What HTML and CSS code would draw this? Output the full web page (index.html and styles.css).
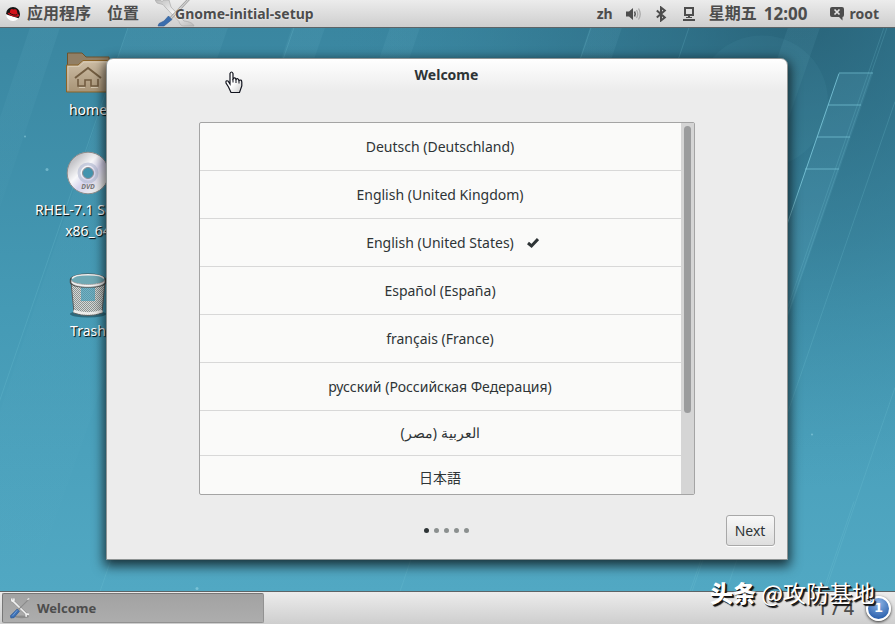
FILE: index.html
```html
<!DOCTYPE html>
<html lang="zh-CN">
<head>
<meta charset="utf-8">
<meta name="viewport" content="width=device-width, initial-scale=1">
<title>Welcome</title>
<link rel="stylesheet" href="styles.css">
</head>
<body>
<svg class="defs" width="0" height="0" aria-hidden="true">
  <defs>
    <linearGradient id="steel" x1="0" y1="0" x2="1" y2="1"><stop offset="0" stop-color="#bdbdbd"/><stop offset=".5" stop-color="#f6f6f6"/><stop offset="1" stop-color="#b9b9b9"/></linearGradient>
    <symbol id="tools" viewBox="0 0 24 24">
      <ellipse cx="14" cy="21.600" rx="8" ry="1.500" fill="#000" opacity=".18"/>
      <path d="M3 1.500 3.200 4.200 5.300 4 5.500 1.500M3.200 4.200 5.800 5.800 18.500 18.300 18.800 21.500M18.500 18.300 22 19" fill="none" stroke="#8f8f8f" stroke-width="2.800" stroke-linejoin="round"/>
      <path d="M3 1.500 3.200 4.200 5.300 4 5.500 1.500M3.200 4.200 5.800 5.800 18.500 18.300 18.800 21.500M18.500 18.300 22 19" fill="none" stroke="#f0f0f0" stroke-width="1.800" stroke-linejoin="round"/>
      <path d="M21.500 2.500 10.500 13.500" stroke="#8a8a8a" stroke-width="1.100"/>
      <path d="M20 3 22 1.500" stroke="#ddd" stroke-width="1.600"/>
      <path d="M9 13 11.500 15.500 5.500 22.500 2 23 1.500 20.500Z" fill="#3c70b5" stroke="#234f8b" stroke-width=".6"/>
      <path d="M9 14.500 4 20.500" stroke="#7fa9dd" stroke-width=".9"/>
    </symbol>
  </defs>
</svg>

<header class="panel panel-top">
  <nav class="panel-group menus">
    <button class="panel-button" type="button">
      <svg class="hat" viewBox="0 0 16 16" aria-hidden="true"><circle cx="8" cy="8" r="6.900" fill="#fff"/><path d="M1 8A7 7 0 0 1 15 8C15 9.500 14.500 11 13.500 12.200L8 10.500 3 9Z" fill="#151515"/><path d="M4.500 7.500 5.400 3.700C7 2 8 4 9.500 3.300 11.500 2.600 12.200 4 12.500 7.800 15 9 14.500 10.800 11.500 10.800 7.500 10.800 2.500 8.500 2.700 7 3 6.200 4 7 4.500 7.500Z" fill="#d3141c"/><path d="M4.800 7C6.500 8.800 10 9.600 12.300 8.700" fill="none" stroke="#111" stroke-width=".9"/></svg>
      <span>应用程序</span>
    </button>
    <button class="panel-button" type="button">位置</button>
    <button class="panel-button app-menu" type="button">
      <span class="app-icon"><svg viewBox="0 0 42 28" aria-hidden="true">
        <path d="M0 0 2 3 8 4.500 11 8 24 21.500C25 25 27 26 29 26H39C38 23 34 21.500 29 21L16 7 14 0H9L7 1.500 5 0Z" fill="url(#steel)" stroke="#aaa" stroke-width=".7"/>
        <path d="M34-1 16 18" stroke="#999" stroke-width="2.600"/><path d="M34-1 16 18" stroke="#d2d2d2" stroke-width="1.200"/>
        <path d="M13.500 16 17 19.500 9 26H3L4 23.500 9 21Z" fill="#3b6eae" stroke="#2e5990" stroke-width=".6"/>
      </svg></span>
      <span class="app-name">Gnome-initial-setup</span>
    </button>
  </nav>
  <div class="panel-group status">
    <button class="panel-button latin" type="button">zh</button>
    <button class="panel-button" type="button" aria-label="音量"><svg class="glyph" viewBox="0 0 16 16"><path d="M1 5.500H4L8 2V14L4 10.500H1Z" fill="#4d4d4d"/><path d="M9.500 5.500Q11 8 9.500 10.500" fill="none" stroke="#555" stroke-width="1.500"/><path d="M11.500 4Q14 8 11.500 12M13.500 2.500Q17 8 13.500 13.500" fill="none" stroke="#aaa" stroke-width="1.300"/></svg></button>
    <button class="panel-button" type="button" aria-label="蓝牙"><svg class="glyph" viewBox="0 0 16 16"><path d="M3.800 4.500 11.800 11.500 8 14.500V1.500L11.800 4.500 3.800 11.500" fill="none" stroke="#4d4d4d" stroke-width="2"/></svg></button>
    <button class="panel-button" type="button" aria-label="网络"><svg class="glyph" viewBox="0 0 16 16"><path d="M4 2H12V9H4Z" fill="none" stroke="#4d4d4d" stroke-width="2"/><path d="M7 9.500H9V12H7ZM2 13H14V15H2ZM5 11H11V12H5Z" fill="#4d4d4d"/></svg></button>
    <button class="panel-button clock" type="button"><span>星期五</span><time>12:00</time></button>
    <button class="panel-button user" type="button"><svg class="glyph" viewBox="0 0 16 16" aria-hidden="true"><path d="M3 1H13Q15 1 15 3V9Q15 11 13.500 11V14.500L10 11H3Q1 11 1 9V3Q1 1 3 1Z" fill="#4d4d4d"/><path d="M5.500 3.500 10.500 8.500M10.500 3.500 5.500 8.500" stroke="#e2e2e2" stroke-width="1.700"/></svg><span class="latin">root</span></button>
  </div>
</header>

<main class="desktop">
  <svg class="wallpaper" viewBox="0 0 895 564" preserveAspectRatio="xMidYMid slice" aria-hidden="true">
    <defs>
      <linearGradient id="sky" x1="0" y1="0" x2="0" y2="1"><stop offset="0" stop-color="#3a86a0"/><stop offset=".5" stop-color="#459ab5"/><stop offset="1" stop-color="#51a8c3"/></linearGradient>
      <radialGradient id="dark" gradientUnits="userSpaceOnUse" cx="800" cy="-20" r="480"><stop offset="0" stop-color="#23586c" stop-opacity=".75"/><stop offset=".5" stop-color="#2a677e" stop-opacity=".4"/><stop offset="1" stop-color="#3a86a0" stop-opacity="0"/></radialGradient>
      <linearGradient id="beam" x1="0" y1="0" x2="0" y2="1"><stop offset="0" stop-color="#7cc6da" stop-opacity=".09"/><stop offset="1" stop-color="#7cc6da" stop-opacity="0"/></linearGradient>
    </defs>
    <rect width="895" height="564" fill="url(#sky)"/>
    <rect width="895" height="564" fill="url(#dark)"/>
    <g fill="url(#beam)"><path d="M30 0H60L-20 240H-50Z"/><path d="M128 0H228L30 564H-60Z"/><path d="M292 0H325L130 564H97Z"/><path d="M390 0H420L225 564H195Z"/><path d="M590 0H622L430 564H398Z"/><path d="M788 0H820L625 564H593Z"/></g>
    <circle cx="762" cy="74" r="66" fill="#7cc6da" opacity=".06"/>
    <path d="M839 46H873L760 370H727Z" fill="#7cc6da" opacity=".12"/>
    <g fill="none" stroke="#7fcbdd" stroke-width="1"><path d="M839 46 722 386" opacity=".8"/><path d="M839 45.500H873M828 77.500H861M817 109.500H850M805 141.500H839" opacity=".65"/><path d="M884 0 690 564M128 0-66 564M294 0 100 564M591 0 400 564M689 0 600 264M887 0 692 564M895 74 726 564M854 474 823 564M895 360 825 564" opacity=".2"/></g>
    <g fill="#a1dcea" opacity=".5"><circle cx="25" cy="109" r="1"/><circle cx="47" cy="142" r="1.500"/><circle cx="197" cy="561" r="1.500"/><circle cx="812" cy="407" r="1"/></g>
  </svg>

  <ul class="shortcuts">
    <li><a href="#home" class="shortcut">
      <svg class="shortcut-icon" viewBox="0 0 48 48" aria-hidden="true"><defs><linearGradient id="folder" x1="0" y1="0" x2="0" y2="1"><stop offset="0" stop-color="#cdbda5"/><stop offset="1" stop-color="#a89476"/></linearGradient></defs><path d="M3.500 42V4H18L22 8H45V42Z" fill="#917f65" stroke="#6e532c"/><path d="M2.500 43V16H14L19 11.500H46V43Z" fill="url(#folder)" stroke="#8b6429"/><path d="M4 41.500V17.500H15L20 13H45" fill="none" stroke="#e0d3bd" stroke-width=".7"/><path d="M11 29 24 19 37 29" fill="none" stroke="#735d41" stroke-width="2"/><path d="M14 30V37H21V31H27V37H34V30" fill="none" stroke="#735d41" stroke-width="1.600"/><path d="M15 38.500H21M27 38.500H34" stroke="#ded2bc" stroke-width=".8"/></svg>
      <span>home</span></a></li>
    <li><a href="#dvd" class="shortcut">
      <svg class="shortcut-icon" viewBox="0 0 48 48" aria-hidden="true"><defs><linearGradient id="disc" x1="0" y1="0" x2="1" y2="1"><stop offset="0" stop-color="#c4c4c8"/><stop offset=".35" stop-color="#f8f8fa"/><stop offset=".6" stop-color="#d8d5ee"/><stop offset="1" stop-color="#efefef"/></linearGradient></defs><circle cx="24" cy="24" r="13.200" fill="none" stroke="url(#disc)" stroke-width="15.500"/><circle cx="24" cy="24" r="20.800" fill="none" stroke="#8b8b8b" stroke-width="1"/><circle cx="24" cy="24" r="9" fill="none" stroke="#b6bed4" stroke-width="3" opacity=".7"/><circle cx="24" cy="24" r="5.500" fill="none" stroke="#8d8d94"/><text x="24" y="40" class="disc-label">DVD</text></svg>
      <span>RHEL-7.1 Server.<br>x86_64</span></a></li>
    <li><a href="#trash" class="shortcut">
      <svg class="shortcut-icon" viewBox="0 0 48 48" aria-hidden="true"><defs><pattern id="mesh" width="2" height="2" patternUnits="userSpaceOnUse"><rect width="2" height="2" fill="#d6d8d6"/><path d="M0 0H1V1H0ZM1 1H2V2H1Z" fill="#8b9493"/></pattern></defs><ellipse cx="24" cy="44" rx="18" ry="3.500" fill="#133843" opacity=".5"/><path d="M7 12 10 43Q24 48 38 43L41 12Z" fill="url(#mesh)" stroke="#5d6161"/><path d="M17 17H31V31H17Z" fill="#3f9dba" opacity=".65"/><path d="M9.500 41Q24 46 38.500 41" fill="none" stroke="#eeeeec" stroke-width="2.500"/><ellipse cx="24" cy="9.500" rx="16.500" ry="5" fill="#6fa9b5"/><path d="M6.500 9.500C7 2.500 41 2.500 41.500 9.500V12.500C39 18.500 9 18.500 6.500 12.500Z" fill="none" stroke="#444846" stroke-width="1.400"/><path d="M7.300 10C10 16 38 16 40.700 10V12.500C38 18.500 10 18.500 7.300 12.500Z" fill="#f2f2f2" stroke="#999" stroke-width=".6"/><path d="M8 8.500C11 3.500 37 3.500 40 8.500" fill="none" stroke="#eee" stroke-width="1.500"/></svg>
      <span>Trash</span></a></li>
  </ul>

  <section class="window" aria-labelledby="window-title">
    <h1 class="titlebar" id="window-title">Welcome</h1>
    <div class="language-box">
      <ul class="languages">
        <li><button type="button">Deutsch (Deutschland)</button></li>
        <li><button type="button">English (United Kingdom)</button></li>
        <li><button type="button" aria-pressed="true"><span class="chosen">English (United States)<svg class="check" viewBox="0 0 12 12" aria-hidden="true"><path d="M1 6 4.500 9 11 2" fill="none" stroke="#2e3436" stroke-width="3"/></svg></span></button></li>
        <li><button type="button" lang="es">Español (España)</button></li>
        <li><button type="button" lang="fr">français (France)</button></li>
        <li><button type="button" lang="ru">русский (Российская Федерация)</button></li>
        <li class="compact"><button type="button" lang="ar" dir="rtl">العربية (مصر)</button></li>
        <li class="compact"><button class="cjk" type="button" lang="ja">日本語</button></li>
      </ul>
      <div class="scroll-track"><div class="scroll-thumb"></div></div>
    </div>
    <footer class="window-footer">
      <div class="dots" aria-hidden="true"><i class="current"></i><i></i><i></i><i></i><i></i></div>
      <button class="next" type="button">Next</button>
    </footer>
    <svg class="pointer" viewBox="0 0 18 23" aria-hidden="true"><defs><linearGradient id="hand" x1="0" y1="0" x2="1" y2="1"><stop offset=".5" stop-color="#fff"/><stop offset="1" stop-color="#ccc"/></linearGradient></defs><path d="M5 13V2.500Q6.500-.5 8 2.500V8Q10 5.500 11 8.500 13 6.500 14 9.500 16.500 8 16.800 11V15L14.500 21.500H6L3.500 16 1 12Q.5 9 3 10Z" fill="url(#hand)" stroke="#11131d" stroke-width="1.200"/><path d="M8 8V11.500M11 8.500V12M14 9.500V12.500" stroke="#11131d"/></svg>
  </section>
</main>

<footer class="panel panel-bottom">
  <button class="task" type="button"><svg class="task-icon" aria-hidden="true"><use href="#tools"/></svg>Welcome</button>
  <div class="tray"><span class="pager">1 / 4</span><button class="badge" type="button">1</button></div>
  <p class="watermark"><b>头条</b> @攻防基地</p>
</footer>
</body>
</html>
```
FILE: styles.css
```css
* { box-sizing: border-box; }

body {
  margin: 0;
  min-height: 100vh;
  display: flex;
  flex-direction: column;
  overflow: hidden;
  font: 14px/21px "Noto Sans", "Noto Sans CJK SC", sans-serif;
  color: #2e3436;
}

button { font: inherit; color: inherit; border: 0; padding: 0; background: none; }
ul { list-style: none; margin: 0; padding: 0; }
.defs { position: absolute; }

.panel {
  display: flex;
  justify-content: space-between;
  background: linear-gradient(#ececec, #cecece);
  color: #4d4d4d;
  font-weight: 700;
}
.panel-top { height: 28px; border-bottom: 1px solid #5c6467; }
.panel-group { display: flex; align-items: stretch; }
.menus { padding-left: 5px; gap: 16px; }
.status { padding-right: 16px; gap: 12px; }
.panel-button { display: flex; align-items: center; font-size: 16px; white-space: nowrap; }
.hat { width: 16px; height: 16px; margin-right: 6px; }
.app-menu { font-size: 14px; }
.app-icon { width: 20px; height: 28px; }
.app-icon svg { display: block; width: 42px; height: 28px; }
.app-name { position: relative; text-shadow: 0 0 2px #fff; }
.panel-button.latin, .latin { font-size: 14px; }
.glyph { display: block; width: 16px; height: 16px; }
.clock { gap: 7px; }
.clock time { font-size: 17px; }
.user { gap: 4px; margin-left: 10px; }

.desktop {
  position: relative;
  flex: 1;
  display: flex;
  align-items: center;
  justify-content: center;
  padding: 0 2px 2px 0;
  background: #459ab5;
}
.wallpaper { position: absolute; inset: 0; width: 100%; height: 100%; }

.shortcuts {
  position: absolute;
  top: 21px;
  left: 23px;
  width: 130px;
  display: flex;
  flex-direction: column;
  gap: 29px;
}
.shortcut {
  display: flex;
  flex-direction: column;
  align-items: center;
  gap: 2px;
  text-align: center;
  color: #fff;
  text-decoration: none;
  text-shadow: 1px 1px 1px #000;
}
.shortcut-icon { width: 48px; height: 48px; }
.disc-label { font: italic 700 7px "Noto Sans", sans-serif; fill: #777; text-anchor: middle; text-shadow: none; }

.window {
  position: relative;
  width: 682px;
  max-width: 100%;
  padding-bottom: 13px;
  border: 1px solid #8f9494;
  border-radius: 7px 7px 0 0;
  background: linear-gradient(#fff, #ececec 32px);
  box-shadow: 0 4px 12px 2px rgba(0, 0, 0, .7);
}
.titlebar { margin: 0; padding: 5px 0 37px; font-size: 14px; line-height: 21px; text-align: center; }

.language-box {
  height: 373px;
  margin: 0 92px;
  display: flex;
  overflow: hidden;
  border: 1px solid #a4a4a4;
  border-radius: 2px;
  background: #fafaf9;
}
.languages { flex: 1; }
.languages button { display: block; width: 100%; height: 48px; border-bottom: 1px solid #d8d8d8; }
.languages .compact button { height: 45px; }
.languages .cjk { font-family: "Noto Sans CJK JP", sans-serif; }
.chosen { position: relative; }
.check { position: absolute; left: 100%; top: 4px; width: 12px; height: 12px; margin-left: 13px; }
.scroll-track { width: 13px; padding: 3px; background: #d5d5d5; }
.scroll-thumb { width: 7px; height: 287px; border-radius: 4px; background: #9b9c9d; }

.window-footer {
  display: grid;
  grid-template-columns: 1fr auto 1fr;
  align-items: center;
  padding: 20px 12px 0;
}
.dots { grid-column: 2; display: flex; gap: 5px; }
.dots i { width: 5px; height: 5px; border-radius: 50%; background: #8b908f; }
.dots .current { background: #2e3436; }
.next {
  justify-self: end;
  width: 49px;
  height: 31px;
  border: 1px solid #a8a8a8;
  border-radius: 3px;
  background: linear-gradient(#f8f8f8, #dedede);
  box-shadow: 0 1px #fff;
}
.pointer { position: absolute; left: 118px; top: 12px; width: 18px; height: 23px; }

.panel-bottom { position: relative; height: 33px; border-top: 1px solid #5c6467; padding: 1px 4px 1px 2px; }
.task {
  width: 262px;
  display: flex;
  align-items: center;
  gap: 6px;
  padding-left: 6px;
  border: 1px solid #777;
  border-right-color: #929292;
  border-bottom-color: #929292;
  border-radius: 2px;
  background: linear-gradient(#a2a2a2, #adadad);
  font-size: 13px;
}
.task-icon { width: 22px; height: 24px; }
.tray { display: flex; align-items: center; gap: 12px; }
.pager { font-size: 18px; font-weight: 500; white-space: nowrap; }
.badge {
  width: 25px;
  height: 25px;
  border: 2px solid #fff;
  border-radius: 50%;
  background: radial-gradient(circle at 50% 25%, #8eb4e6, #2d62ad 80%);
  box-shadow: 0 1px 3px #333;
  color: #fff;
  font: 700 13px/20px "DejaVu Sans", sans-serif;
}
.watermark {
  position: absolute;
  right: 20px;
  bottom: 16px;
  margin: 0;
  color: #fff;
  font: 400 23px/32px "Noto Sans CJK SC", sans-serif;
  text-shadow: 1px 1px #111, 2px 2px 1px #111;
  white-space: nowrap;
}
.watermark b { font-weight: 900; }
```
